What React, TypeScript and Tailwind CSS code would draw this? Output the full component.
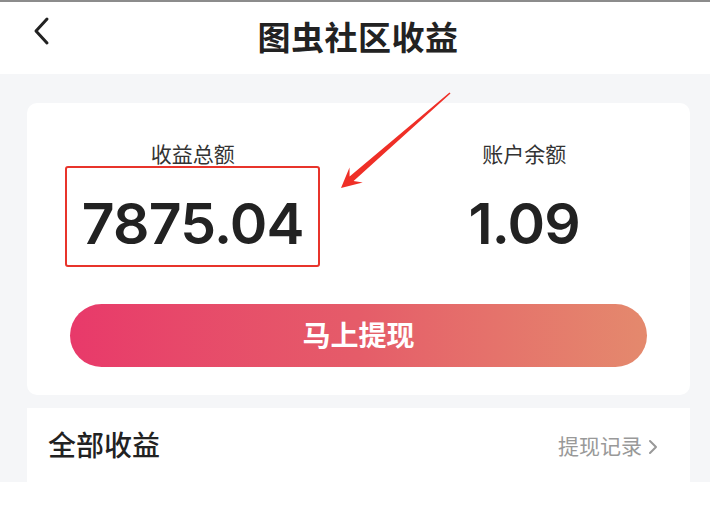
import React from "react";

const cjk = "font-['Inter','Noto_Sans_CJK_SC',sans-serif]";

export default function App() {
  return (
    <div className={`relative w-[710px] h-[506px] overflow-hidden bg-white ${cjk}`}>
      {/* Top bar */}
      <div className="h-[2px] bg-[#8c8c8c]" />
      <header className="relative h-[72px] flex items-center justify-center pl-[6px]">
        <svg
          className="absolute left-[33px] top-[14px]"
          width="18"
          height="30"
          viewBox="0 0 18 30"
          fill="none"
        >
          <path d="M14 3 L3 15 L14 27" stroke="#222" strokeWidth="3" strokeLinecap="round" strokeLinejoin="round" />
        </svg>
        <h1 className="text-[33px] font-bold text-[#222] leading-none tracking-[0.5px]">图虫社区收益</h1>
      </header>

      {/* Body */}
      <main className="h-[408px] overflow-hidden bg-[#f5f6f8] pl-[27px] pr-[20px] pt-[29px]">
        {/* Summary card */}
        <section className="h-[292px] rounded-[10px] bg-white pt-[41px]">
          <div className="grid grid-cols-2">
            <div className="flex flex-col items-center">
              <p className="text-[21px] leading-[22px] text-[#333]">收益总额</p>
              <div className="w-[255px] h-[101px] border-2 border-[#e8342b] rounded-[3px] flex items-center justify-center pt-[14px]">
                <span className="font-['Inter',sans-serif] text-[57px] font-semibold leading-none text-[#222] tracking-[-0.8px]">
                  7875.04
                </span>
              </div>
            </div>
            <div className="flex flex-col items-center">
              <p className="text-[21px] leading-[22px] text-[#333]">账户余额</p>
              <div className="w-[255px] h-[101px] border-2 border-transparent flex items-center justify-center pt-[14px]">
                <span className="font-['Inter',sans-serif] text-[57px] font-semibold leading-none text-[#222] tracking-[-0.8px]">
                  1.09
                </span>
              </div>
            </div>
          </div>

          <button className="mt-[37px] mx-[43px] w-[577px] h-[63px] rounded-full bg-gradient-to-r from-[#e8396a] via-[#e55c69] to-[#e4896d] flex items-center justify-center">
            <span className="text-[28px] font-bold text-white leading-none">马上提现</span>
          </button>
        </section>

        {/* All earnings */}
        <section className="mt-[13px] h-[120px] bg-white pl-[21px] pr-[32px] pt-[24px] flex items-start justify-between">
          <h2 className="text-[28px] font-medium leading-[28px] text-[#222]">全部收益</h2>
          <div className="flex items-center gap-[6px] pt-[3px]">
            <span className="text-[21px] leading-[24px] text-[#999]">提现记录</span>
            <svg width="10" height="16" viewBox="0 0 10 16" fill="none">
              <path d="M2 2 L8 8 L2 14" stroke="#999" strokeWidth="2" strokeLinecap="round" strokeLinejoin="round" />
            </svg>
          </div>
        </section>
      </main>

      {/* Annotation arrow */}
      <svg className="pointer-events-none absolute left-0 top-0" width="710" height="506">
        <polygon
          points="450.5,93.6 353.6,181.1 362.7,182.4 341,188 349.5,167.4 349.6,176.5 449.5,92.4"
          fill="#ef2f27"
        />
      </svg>
    </div>
  );
}
